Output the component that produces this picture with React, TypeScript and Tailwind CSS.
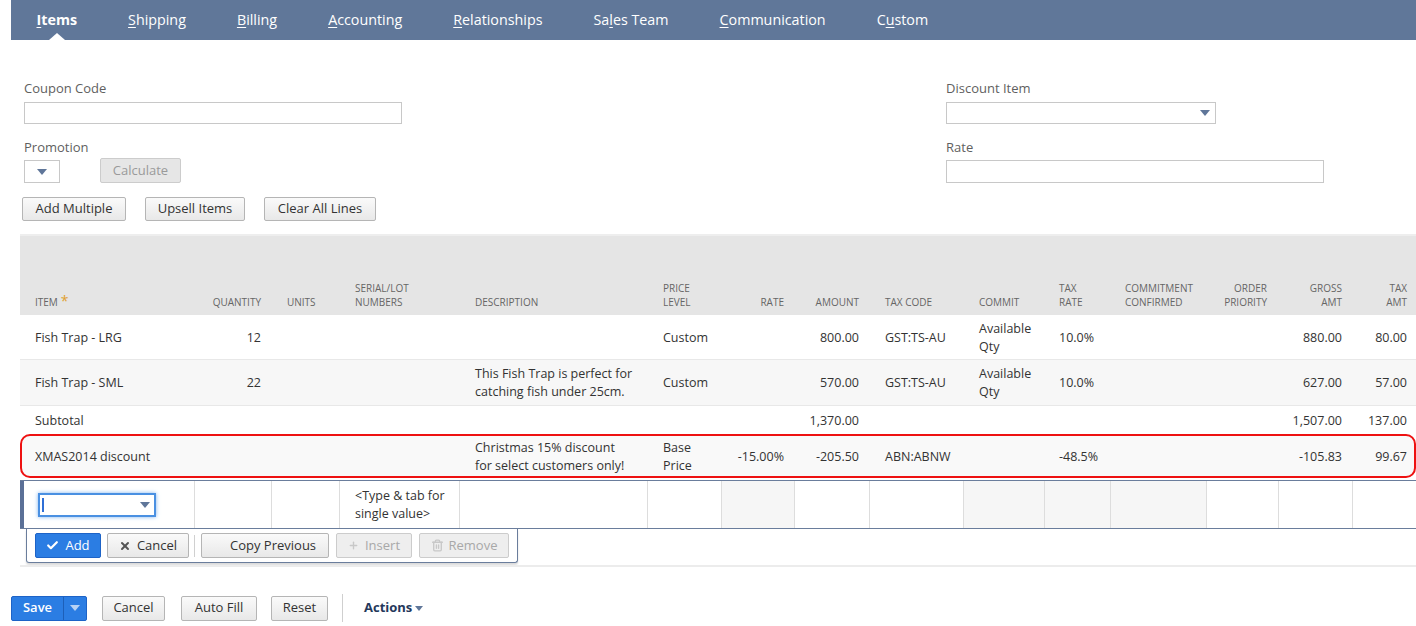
import React from 'react';
import { Check, X, Plus, Trash2 } from 'lucide-react';

type Col = {
  key: string;
  w: string;
  head: string[];
  right?: boolean;
  pad: string;
};

const columns: Col[] = [
  { key: 'item', w: 'w-[175px]', head: ['ITEM'], pad: 'pl-[15px]' },
  { key: 'qty', w: 'w-[77px]', head: ['QUANTITY'], right: true, pad: 'pr-[11px]' },
  { key: 'units', w: 'w-[68px]', head: ['UNITS'], pad: 'pl-[15px]' },
  { key: 'serial', w: 'w-[120px]', head: ['SERIAL/LOT', 'NUMBERS'], pad: 'pl-[15px]' },
  { key: 'desc', w: 'w-[188px]', head: ['DESCRIPTION'], pad: 'pl-[15px]' },
  { key: 'price', w: 'w-[74px]', head: ['PRICE', 'LEVEL'], pad: 'pl-[15px]' },
  { key: 'rate', w: 'w-[73px]', head: ['RATE'], right: true, pad: 'pr-[11px]' },
  { key: 'amount', w: 'w-[75px]', head: ['AMOUNT'], right: true, pad: 'pr-[11px]' },
  { key: 'taxcode', w: 'w-[94px]', head: ['TAX CODE'], pad: 'pl-[15px]' },
  { key: 'commit', w: 'w-[81px]', head: ['COMMIT'], pad: 'pl-[15px]' },
  { key: 'taxrate', w: 'w-[66px]', head: ['TAX', 'RATE'], pad: 'pl-[14px]' },
  { key: 'cc', w: 'w-[96px]', head: ['COMMITMENT', 'CONFIRMED'], pad: 'pl-[14px]' },
  { key: 'op', w: 'w-[72px]', head: ['ORDER', 'PRIORITY'], right: true, pad: 'pr-[12px]' },
  { key: 'gross', w: 'w-[74px]', head: ['GROSS', 'AMT'], right: true, pad: 'pr-[11px]' },
  { key: 'tax', w: 'w-[63px]', head: ['TAX', 'AMT'], right: true, pad: 'pr-[9px]' },
];

type Line = Record<string, string | string[]>;

const lines: { data: Line; rowClass: string }[] = [
  {
    rowClass: 'h-[45px] bg-white border-b border-[#e8e8e8]',
    data: {
      item: 'Fish Trap - LRG',
      qty: '12',
      price: 'Custom',
      amount: '800.00',
      taxcode: 'GST:TS-AU',
      commit: ['Available', 'Qty'],
      taxrate: '10.0%',
      gross: '880.00',
      tax: '80.00',
    },
  },
  {
    rowClass: 'h-[46px] bg-[#f7f7f7] border-b border-[#e8e8e8]',
    data: {
      item: 'Fish Trap - SML',
      qty: '22',
      desc: ['This Fish Trap is perfect for', 'catching fish under 25cm.'],
      price: 'Custom',
      amount: '570.00',
      taxcode: 'GST:TS-AU',
      commit: ['Available', 'Qty'],
      taxrate: '10.0%',
      gross: '627.00',
      tax: '57.00',
    },
  },
  {
    rowClass: 'h-[28px] bg-white',
    data: {
      item: 'Subtotal',
      amount: '1,370.00',
      gross: '1,507.00',
      tax: '137.00',
    },
  },
  {
    rowClass:
      'h-[44px] bg-[#f9f9f9] rounded-[10px] outline-2 outline-[#ee1111] -outline-offset-2',
    data: {
      item: 'XMAS2014 discount',
      desc: ['Christmas 15% discount', 'for select customers only!'],
      price: ['Base', 'Price'],
      rate: '-15.00%',
      amount: '-205.50',
      taxcode: 'ABN:ABNW',
      taxrate: '-48.5%',
      gross: '-105.83',
      tax: '99.67',
    },
  },
];

const tabs = [
  { pre: '', key: 'I', post: 'tems', active: true },
  { pre: '', key: 'S', post: 'hipping' },
  { pre: '', key: 'B', post: 'illing' },
  { pre: '', key: 'A', post: 'ccounting' },
  { pre: '', key: 'R', post: 'elationships' },
  { pre: 'Sa', key: 'l', post: 'es Team' },
  { pre: '', key: 'C', post: 'ommunication' },
  { pre: 'C', key: 'u', post: 'stom' },
];

const shaded = ['rate', 'commit', 'taxrate', 'cc'];

const Caret = ({ color = '#5f7699' }: { color?: string }) => (
  <svg width="10" height="6" viewBox="0 0 10 6">
    <path d="M0 0 L10 0 L5 6 Z" fill={color} />
  </svg>
);

const Btn = ({ children, className = '' }: { children: React.ReactNode; className?: string }) => (
  <button
    className={`flex items-center justify-center rounded-[2px] border border-[#b5b5b5] bg-gradient-to-b from-[#fafafa] to-[#e8e8e8] text-[13px] text-[#333] ${className}`}
  >
    {children}
  </button>
);

const Label = ({ children }: { children: React.ReactNode }) => (
  <div className="h-[16px] text-[13px] leading-[16px] text-[#5f5f5f]">{children}</div>
);

const CellText = ({ v }: { v?: string | string[] }) => {
  if (!v) return null;
  if (Array.isArray(v))
    return (
      <div className="whitespace-nowrap leading-[18px]">
        {v.map((t, i) => (
          <div key={i}>{t}</div>
        ))}
      </div>
    );
  return <div className="whitespace-nowrap leading-[18px]">{v}</div>;
};

export default function App() {
  return (
    <div className="h-[626px] w-[1416px] overflow-hidden bg-white font-['Open_Sans',sans-serif] text-[#333]">
      {/* tabs */}
      <div className="ml-[11px] flex h-[40px] items-center bg-[#607799]">
        {tabs.map((t) => (
          <div
            key={t.key + t.post}
            className={`relative flex h-full items-center px-[25.5px] pb-[1px] text-[14.3px] text-white ${t.active ? 'font-bold' : ''}`}
          >
            <span>
              {t.pre}
              <u className="underline-offset-2">{t.key}</u>
              {t.post}
            </span>
            {t.active && (
              <div className="absolute bottom-0 left-1/2 h-0 w-0 -translate-x-1/2 border-x-[8px] border-b-[7px] border-x-transparent border-b-white" />
            )}
          </div>
        ))}
      </div>

      {/* form */}
      <div className="flex">
        <div className="ml-[24px] w-[922px] pt-[40px]">
          <Label>Coupon Code</Label>
          <div className="mt-[6px] h-[22px] w-[378px] border border-[#c8c8c8] bg-white" />
          <div className="mt-[15px]">
            <Label>Promotion</Label>
          </div>
          <div className="mt-[3px] flex h-[25px] items-end">
            <div className="flex h-[23px] w-[36px] items-center justify-center border border-[#c8c8c8] bg-white pt-[1px]">
              <Caret />
            </div>
            <div className="ml-[40px] flex h-[25px] w-[81px] items-center justify-center rounded-[2px] border border-[#cccccc] bg-[#e6e6e6] text-[13px] text-[#9a9a9a]">
              Calculate
            </div>
          </div>
        </div>
        <div className="pt-[40px]">
          <Label>Discount Item</Label>
          <div className="mt-[6px] flex h-[22px] w-[270px] items-center justify-end border border-[#c8c8c8] bg-white pr-[5px]">
            <Caret />
          </div>
          <div className="mt-[15px]">
            <Label>Rate</Label>
          </div>
          <div className="mt-[5px] h-[23px] w-[378px] border border-[#c8c8c8] bg-white" />
        </div>
      </div>

      {/* list buttons */}
      <div className="ml-[22px] mt-[14px] flex h-[24px] gap-[19px]">
        <Btn className="w-[104px]">Add Multiple</Btn>
        <Btn className="w-[100px]">Upsell Items</Btn>
        <Btn className="w-[112px]">Clear All Lines</Btn>
      </div>

      {/* table */}
      <div className="ml-[20px] mt-[13px] w-[1396px]">
        <div className="flex h-[81px] border-t-[2px] border-[#eeeeee] bg-[#e5e5e5] text-[10px] leading-[14px] text-[#666]">
          {columns.map((c) => (
            <div
              key={c.key}
              className={`flex shrink-0 flex-col justify-end pb-[6px] ${c.w} ${c.pad} ${c.right ? 'items-end text-right' : 'items-start'}`}
            >
              {c.head.map((h, i) => (
                <div key={i} className="whitespace-nowrap">
                  {h}
                  {c.key === 'item' && <span className="ml-[3px] text-[14px] leading-[10px] text-[#e0a030]">*</span>}
                </div>
              ))}
            </div>
          ))}
        </div>

        {lines.map((l, ri) => (
          <div key={ri} className={`flex text-[12.5px] ${l.rowClass}`}>
            {columns.map((c) => (
              <div
                key={c.key}
                className={`flex shrink-0 items-center pt-[1px] ${c.w} ${c.pad} ${c.right ? 'justify-end text-right' : ''}`}
              >
                <CellText v={l.data[c.key]} />
              </div>
            ))}
          </div>
        ))}

        {/* edit row */}
        <div className="mt-[2px] flex h-[49px] border-y border-[#6a7d9c] text-[12.5px]">
          {columns.map((c, i) => (
            <div
              key={c.key}
              className={`flex shrink-0 items-center ${c.w} ${i === 0 ? 'border-l-[4px] border-l-[#5b7097] pl-[15px]' : ''} ${i < columns.length - 1 ? 'border-r border-r-[#dddddd]' : ''} ${shaded.includes(c.key) ? 'bg-[#f6f6f6] bg-[radial-gradient(circle,#c8c8c8_0.45px,transparent_0.6px)] bg-[length:2px_2px]' : ''}`}
            >
              {c.key === 'item' && (
                <div className="ml-[-1px] flex h-[24px] w-[118px] items-center justify-between border-2 border-[#4a90e2] bg-white pl-[2px] pr-[4px] shadow-[0_0_4px_#7fb2ee]">
                  <div className="h-[14px] w-[2px] bg-[#2f6fd6]" />
                  <Caret />
                </div>
              )}
              {c.key === 'serial' && (
                <div className="pl-[15px] leading-[18px]">
                  &lt;Type &amp; tab for
                  <br />
                  single value&gt;
                </div>
              )}
            </div>
          ))}
        </div>

        {/* line buttons */}
        <div className="ml-[6px] flex h-[34px] w-[492px] items-center rounded-b-[3px] border border-t-0 border-[#6a7d9c] pl-[8px] shadow-[0_2px_2px_rgba(0,0,0,0.15)]">
          <button className="flex h-[25px] w-[66px] items-center justify-center gap-[6px] rounded-[2px] border border-[#1d63c7] bg-[#2b7de3] text-[13px] text-white">
            <Check size={13} strokeWidth={4} />
            Add
          </button>
          <Btn className="ml-[6px] h-[25px] w-[82px] gap-[6px]">
            <X size={12} strokeWidth={4} className="text-[#555]" />
            Cancel
          </Btn>
          <div className="ml-[5px] h-[22px] w-px bg-[#d0d0d0]" />
          <Btn className="ml-[6px] h-[25px] w-[128px] pl-[28px] !justify-start">Copy Previous</Btn>
          <div className="ml-[7px] flex h-[25px] w-[76px] items-center justify-center gap-[6px] rounded-[2px] border border-[#cccccc] bg-[#eeeeee] text-[13px] text-[#a8a8a8]">
            <Plus size={11} strokeWidth={3} className="text-[#c8c8c8]" />
            Insert
          </div>
          <div className="ml-[7px] flex h-[25px] w-[90px] items-center justify-center gap-[5px] rounded-[2px] border border-[#cccccc] bg-[#eeeeee] text-[13px] text-[#a8a8a8]">
            <Trash2 size={13} strokeWidth={2.5} className="text-[#c8c8c8]" />
            Remove
          </div>
        </div>
        <div className="mt-[2px] h-[2px] w-full bg-[#ececec]" />
      </div>

      {/* footer */}
      <div className="ml-[11px] mt-[27px] flex h-[28px] items-center">
        <div className="flex h-[25px] w-[76px] overflow-hidden rounded-[2px] border border-[#1d63c7] bg-[#2b7de3] text-[13px] text-white">
          <div className="flex w-[51px] items-center justify-center font-semibold">Save</div>
          <div className="flex flex-1 items-center justify-center border-l border-[#1d5fb8]">
            <Caret color="#b8d2f4" />
          </div>
        </div>
        <Btn className="ml-[15px] h-[25px] w-[63px]">Cancel</Btn>
        <Btn className="ml-[16px] h-[25px] w-[76px]">Auto Fill</Btn>
        <Btn className="ml-[14px] h-[25px] w-[57px]">Reset</Btn>
        <div className="ml-[14px] h-[28px] w-px bg-[#cfcfcf]" />
        <div className="ml-[21px] flex items-center gap-[3px] text-[13px] font-bold text-[#24385b]">
          Actions
          <svg width="8" height="5" viewBox="0 0 8 5">
            <path d="M0 0 L8 0 L4 5 Z" fill="#5f7699" />
          </svg>
        </div>
      </div>
    </div>
  );
}
